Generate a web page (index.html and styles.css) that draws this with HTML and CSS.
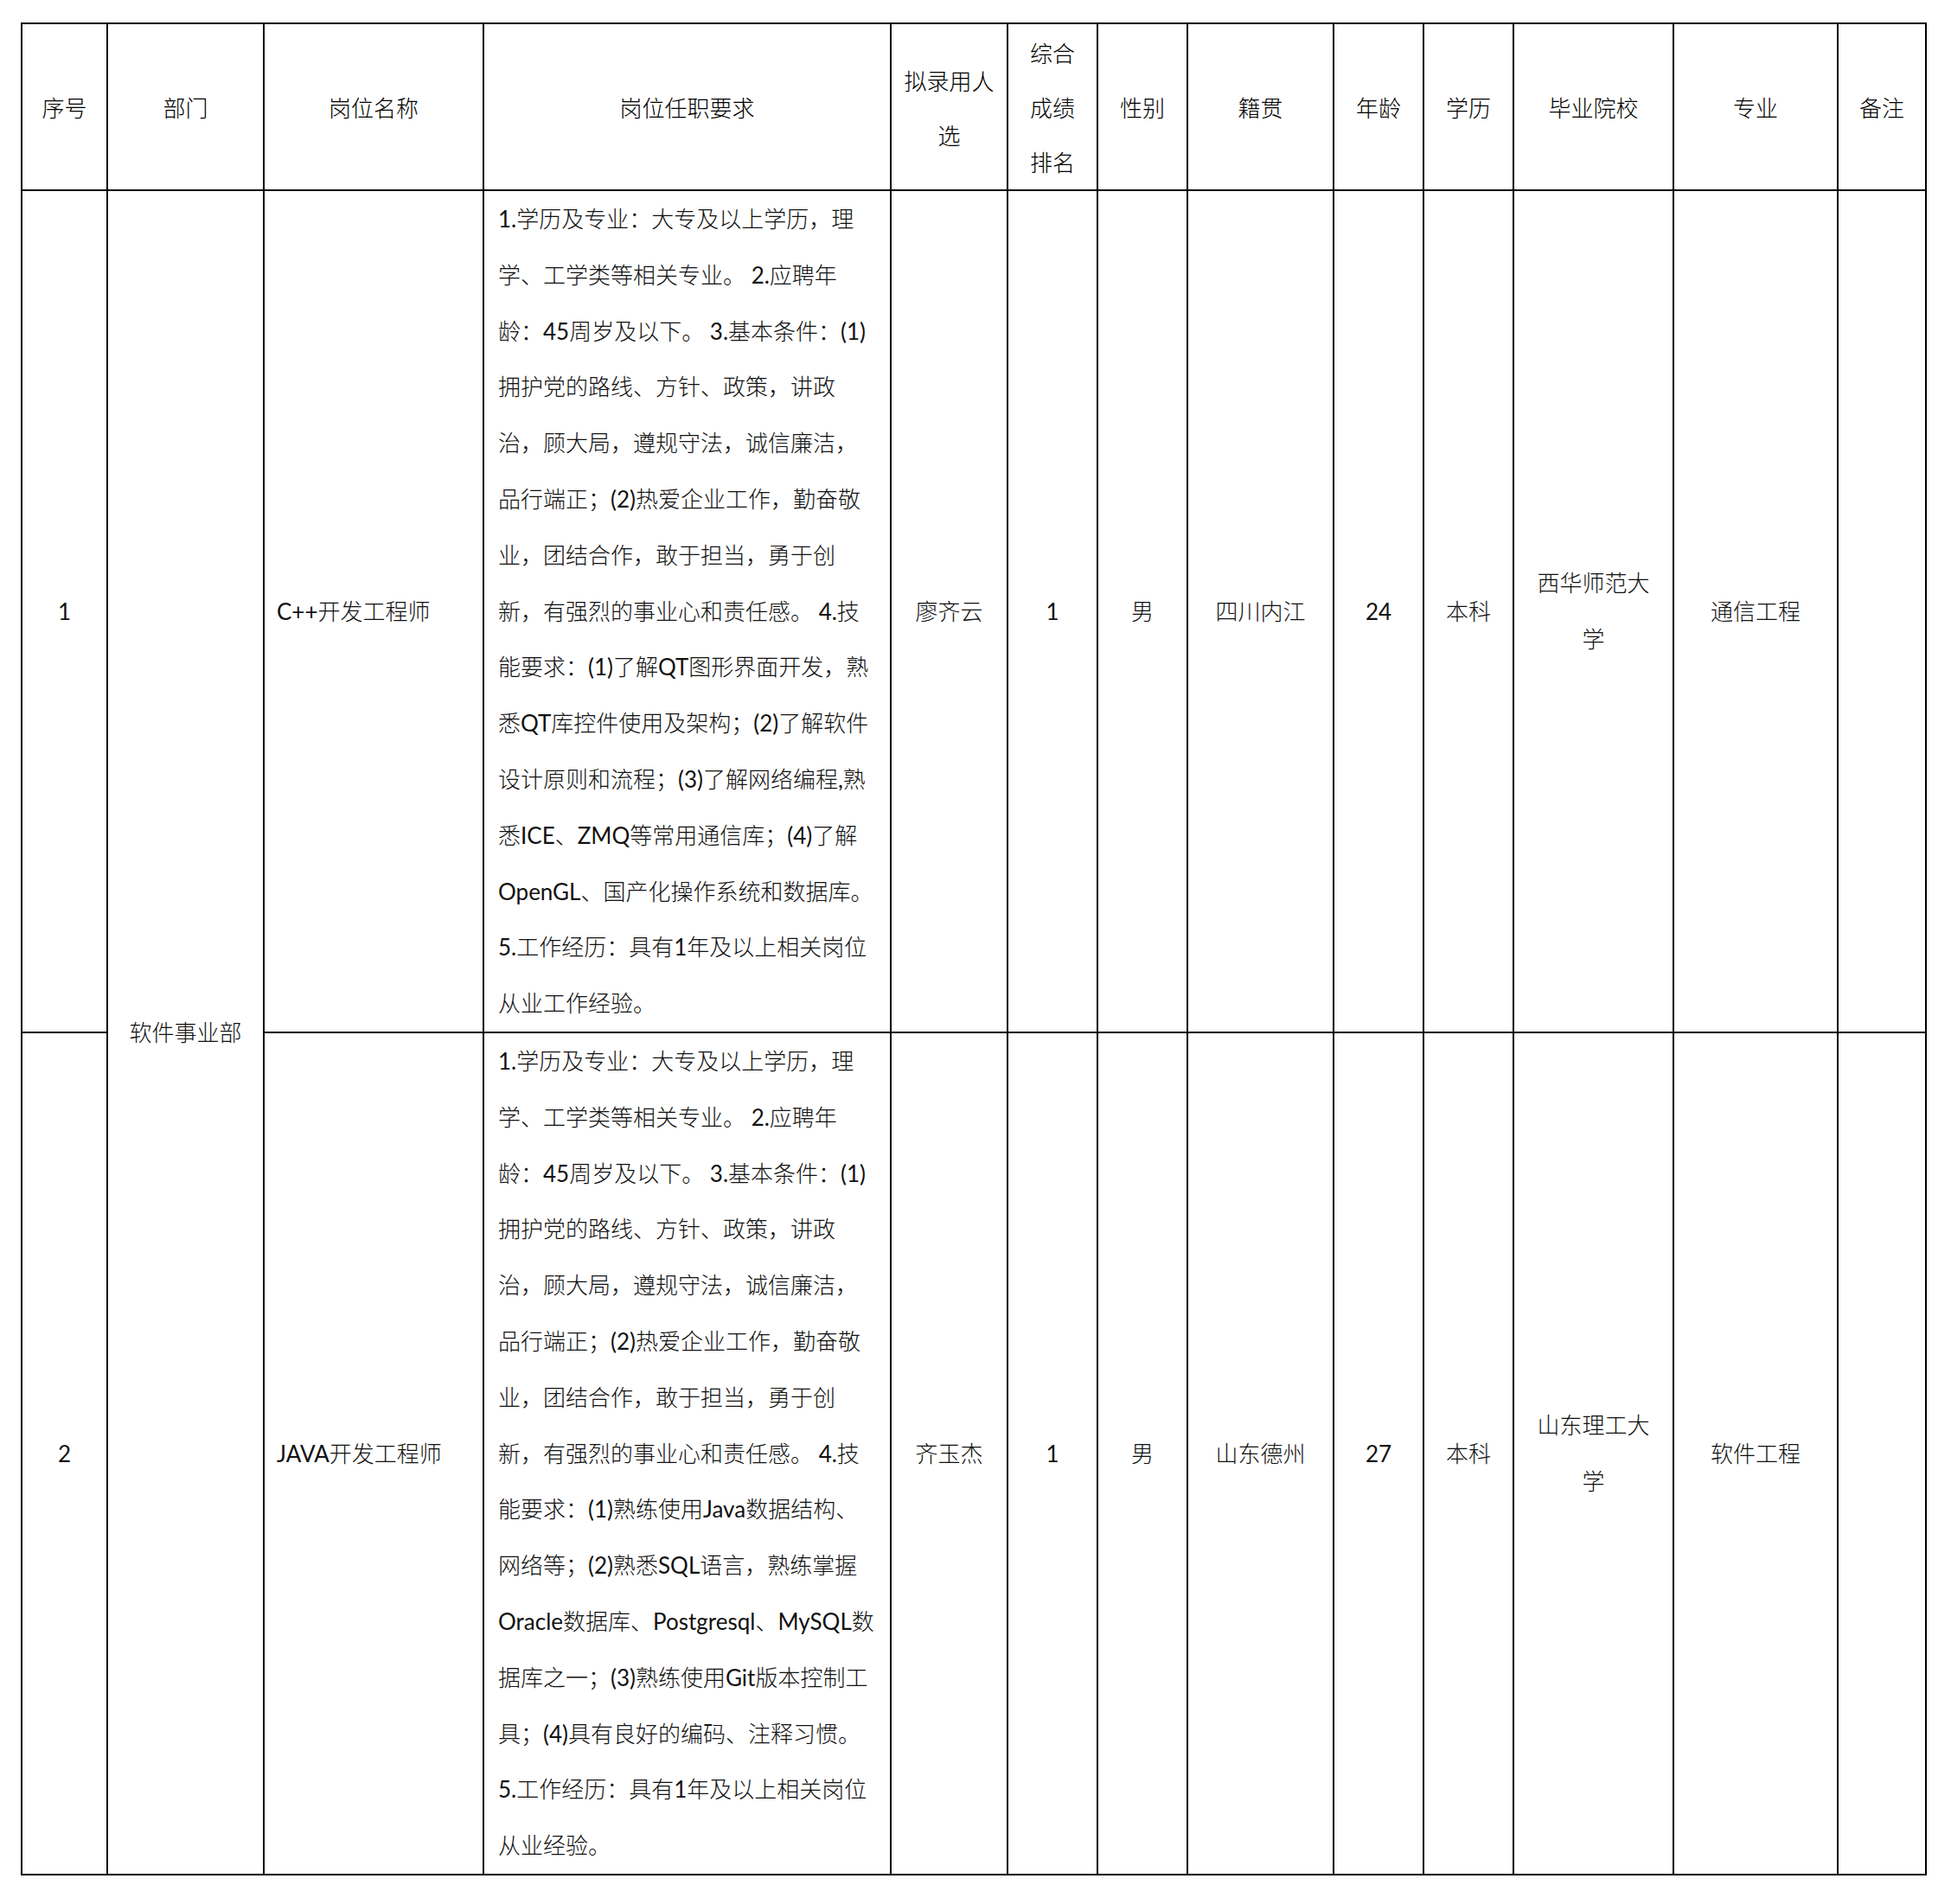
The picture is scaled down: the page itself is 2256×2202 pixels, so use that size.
FILE: index.html
```html
<!DOCTYPE html>
<html lang="zh-CN">
<head>
<meta charset="utf-8">
<title>拟录用人员名单</title>
<link rel="stylesheet" href="styles.css">
</head>
<body>
<div class="page">
<table class="roster">
<colgroup>
<col class="c-no"><col class="c-dept"><col class="c-post"><col class="c-req"><col class="c-name"><col class="c-rank"><col class="c-sex"><col class="c-home"><col class="c-age"><col class="c-edu"><col class="c-school"><col class="c-major"><col class="c-note">
</colgroup>
<thead>
<tr class="head">
<th>序号</th>
<th>部门</th>
<th>岗位名称</th>
<th>岗位任职要求</th>
<th>拟录用人<br>选</th>
<th>综合<br>成绩<br>排名</th>
<th>性别</th>
<th>籍贯</th>
<th>年龄</th>
<th>学历</th>
<th>毕业院校</th>
<th>专业</th>
<th>备注</th>
</tr>
</thead>
<tbody>
<tr class="row r1">
<td>1</td>
<td rowspan="2">软件事业部</td>
<td class="left">C++开发工程师</td>
<td class="req">1.学历及专业：大专及以上学历，理<br>学、工学类等相关专业。 2.应聘年<br>龄：45周岁及以下。 3.基本条件：(1)<br>拥护党的路线、方针、政策，讲政<br>治，顾大局，遵规守法，诚信廉洁，<br>品行端正；(2)热爱企业工作，勤奋敬<br>业，团结合作，敢于担当，勇于创<br>新，有强烈的事业心和责任感。 4.技<br>能要求：(1)了解QT图形界面开发，熟<br>悉QT库控件使用及架构；(2)了解软件<br>设计原则和流程；(3)了解网络编程,熟<br>悉ICE、ZMQ等常用通信库；(4)了解<br>OpenGL、国产化操作系统和数据库。<br>5.工作经历：具有1年及以上相关岗位<br>从业工作经验。</td>
<td>廖齐云</td>
<td>1</td>
<td>男</td>
<td>四川内江</td>
<td>24</td>
<td>本科</td>
<td>西华师范大<br>学</td>
<td>通信工程</td>
<td></td>
</tr>
<tr class="row r2">
<td>2</td>
<td class="left">JAVA开发工程师</td>
<td class="req">1.学历及专业：大专及以上学历，理<br>学、工学类等相关专业。 2.应聘年<br>龄：45周岁及以下。 3.基本条件：(1)<br>拥护党的路线、方针、政策，讲政<br>治，顾大局，遵规守法，诚信廉洁，<br>品行端正；(2)热爱企业工作，勤奋敬<br>业，团结合作，敢于担当，勇于创<br>新，有强烈的事业心和责任感。 4.技<br>能要求：(1)熟练使用Java数据结构、<br>网络等；(2)熟悉SQL语言，熟练掌握<br>Oracle数据库、Postgresql、MySQL数<br>据库之一；(3)熟练使用Git版本控制工<br>具；(4)具有良好的编码、注释习惯。<br>5.工作经历：具有1年及以上相关岗位<br>从业经验。</td>
<td>齐玉杰</td>
<td>1</td>
<td>男</td>
<td>山东德州</td>
<td>27</td>
<td>本科</td>
<td>山东理工大<br>学</td>
<td>软件工程</td>
<td></td>
</tr>
</tbody>
</table>
</div>
</body>
</html>
```
FILE: styles.css
```css
html, body {
  margin: 0;
  padding: 0;
  background: #ffffff;
}

.page {
  padding: 26px 0 0 24px;
}

.roster {
  border-collapse: collapse;
  table-layout: fixed;
  width: 2204px;
  font-family: Lato, "Noto Sans CJK SC Light", "Noto Sans CJK SC DemiLight", "Noto Sans CJK SC", sans-serif;
  font-size: 26px;
  line-height: 64.8px;
  color: #111;
}

.c-no { width: 99px; }
.c-dept { width: 181px; }
.c-post { width: 254px; }
.c-req { width: 471px; }
.c-name { width: 135px; }
.c-rank { width: 104px; }
.c-sex { width: 104px; }
.c-home { width: 169px; }
.c-age { width: 104px; }
.c-edu { width: 104px; }
.c-school { width: 185px; }
.c-major { width: 190px; }
.c-note { width: 102px; }

.roster th,
.roster td {
  border: 2px solid #000;
  padding: 0 12px;
  text-align: center;
  vertical-align: middle;
  white-space: nowrap;
  overflow: hidden;
}

.roster th {
  font-family: "Noto Sans CJK SC", sans-serif;
  font-weight: 300;
  line-height: 63px;
  color: #000;
}

.roster td {
  font-weight: 400;
}

.head {
  height: 193px;
}

.r1 {
  height: 973px;
}

.r2 {
  height: 974px;
}

.roster td.left {
  text-align: left;
  padding-left: 14px;
}

.roster td.req {
  text-align: left;
  padding: 0 10px 0 16px;
}
```
